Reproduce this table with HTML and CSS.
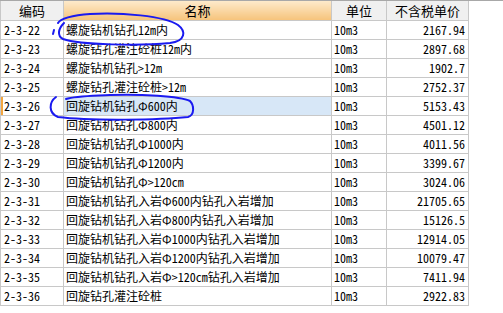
FILE: index.html
```html
<!DOCTYPE html>
<html lang="zh">
<head>
<meta charset="utf-8">
<link rel="stylesheet" href="styles.css">
</head>
<body>
<div class="wrap">
<table class="grid">
  <colgroup>
    <col class="c-code"><col class="c-name"><col class="c-unit"><col class="c-price">
  </colgroup>
  <thead>
    <tr><th>编码</th><th class="sorted">名称</th><th>单位</th><th>不含税单价</th></tr>
  </thead>
  <tbody>
    <tr><td class="code">2-3-22</td><td>螺旋钻机钻孔12m内</td><td class="unit">10m3</td><td class="num">2167.94</td></tr>
    <tr><td class="code">2-3-23</td><td>螺旋钻孔灌注砼桩12m内</td><td class="unit">10m3</td><td class="num">2897.68</td></tr>
    <tr><td class="code">2-3-24</td><td>螺旋钻机钻孔&gt;12m</td><td class="unit">10m3</td><td class="num">1902.7</td></tr>
    <tr><td class="code">2-3-25</td><td>螺旋钻孔灌注砼桩&gt;12m</td><td class="unit">10m3</td><td class="num">2752.37</td></tr>
    <tr class="current"><td class="code">2-3-26</td><td class="sel">回旋钻机钻孔Φ600内</td><td class="unit">10m3</td><td class="num">5153.43</td></tr>
    <tr><td class="code">2-3-27</td><td>回旋钻机钻孔Φ800内</td><td class="unit">10m3</td><td class="num">4501.12</td></tr>
    <tr><td class="code">2-3-28</td><td>回旋钻机钻孔Φ1000内</td><td class="unit">10m3</td><td class="num">4011.56</td></tr>
    <tr><td class="code">2-3-29</td><td>回旋钻机钻孔Φ1200内</td><td class="unit">10m3</td><td class="num">3399.67</td></tr>
    <tr><td class="code">2-3-30</td><td>回旋钻机钻孔Φ&gt;120cm</td><td class="unit">10m3</td><td class="num">3024.06</td></tr>
    <tr><td class="code">2-3-31</td><td>回旋钻机钻孔入岩Φ600内钻孔入岩增加</td><td class="unit">10m3</td><td class="num">21705.65</td></tr>
    <tr><td class="code">2-3-32</td><td>回旋钻机钻孔入岩Φ800内钻孔入岩增加</td><td class="unit">10m3</td><td class="num">15126.5</td></tr>
    <tr><td class="code">2-3-33</td><td>回旋钻机钻孔入岩Φ1000内钻孔入岩增加</td><td class="unit">10m3</td><td class="num">12914.05</td></tr>
    <tr><td class="code">2-3-34</td><td>回旋钻机钻孔入岩Φ1200内钻孔入岩增加</td><td class="unit">10m3</td><td class="num">10079.47</td></tr>
    <tr><td class="code">2-3-35</td><td>回旋钻机钻孔入岩Φ&gt;120cm钻孔入岩增加</td><td class="unit">10m3</td><td class="num">7411.94</td></tr>
    <tr><td class="code">2-3-36</td><td>回旋钻孔灌注砼桩</td><td class="unit">10m3</td><td class="num">2922.83</td></tr>
  </tbody>
</table>
<svg class="ink" width="503" height="313" viewBox="0 0 503 313" xmlns="http://www.w3.org/2000/svg">
  <path d="M53 33 L54 29" />
  <path d="M64 22 C58 28 57 35 63 38 C80 44 140 45 170 42 C186 40 186 30 178 24 C165 15 120 11 90 13 C72 14 60 18 58 22" />
  <path d="M56 96 C49 101 48 112 58 116 C90 120 160 119 188 116 C195 114 194 104 190 100 C180 95 140 93 110 94 C90 95 75 95 66 98" />
</svg>
</div>
</body>
</html>
```
FILE: styles.css
```css
html, body {
  margin: 0;
  padding: 0;
  background: #ffffff;
}
.wrap {
  position: relative;
  width: 503px;
  height: 313px;
  overflow: hidden;
  border-top: 1px solid #a8a8a8;
  box-sizing: border-box;
}
.grid {
  border-collapse: collapse;
  table-layout: fixed;
  width: 468px;
  font-family: "Noto Sans Mono CJK SC", "Noto Sans CJK SC", monospace;
  font-size: 12px;
  color: #000;
}
.c-code { width: 63px; }
.c-name { width: 268px; }
.c-unit { width: 55px; }
.c-price { width: 82px; }
.grid th {
  height: 19px;
  padding: 0;
  font-family: "Noto Sans CJK SC", sans-serif;
  font-weight: normal;
  font-size: 13px;
  background: #f0f0f0;
  border: 1px solid #c8c8c8;
  border-top: none;
  text-align: center;
  line-height: 19px;
}
.grid th.sorted {
  background: linear-gradient(#fdeacb, #f6c47c);
}
.grid td {
  height: 18px;
  padding: 0 2px;
  border: 1px solid #c8c8c8;
  line-height: 18px;
  white-space: nowrap;
  overflow: hidden;
}
.grid td.code { padding-left: 3px; }
.grid td.num { text-align: right; padding-right: 3px; }
.grid td.sel { background: #d7e7f7; }
.grid tr.current td.code { box-shadow: inset 2px 0 0 #f2a640; }
.ink {
  position: absolute;
  left: 0;
  top: 0;
  fill: none;
  stroke: #1a1af0;
  stroke-width: 2;
  stroke-linecap: round;
  pointer-events: none;
}
```
